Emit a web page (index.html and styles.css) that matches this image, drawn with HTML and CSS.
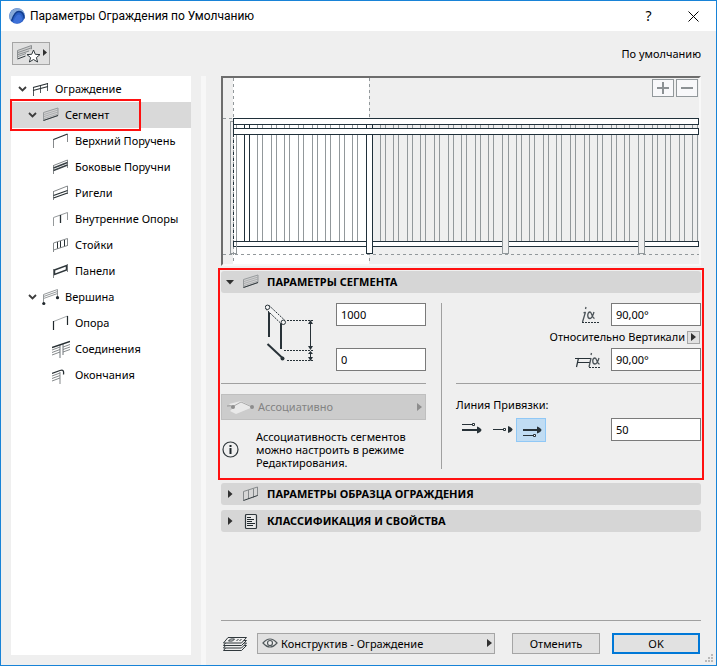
FILE: index.html
```html
<!DOCTYPE html>
<html lang="ru">
<head>
<meta charset="utf-8">
<meta name="viewport" content="width=device-width, initial-scale=1">
<title>Параметры Ограждения по Умолчанию</title>
<link rel="stylesheet" href="styles.css">
</head>
<body>
<svg class="defs" aria-hidden="true">
  <symbol id="chevron" viewBox="0 0 9 8"><path d="M1 2l3.500 3.500L8 2" fill="none" stroke="#3c3c3c" stroke-width="1.800"/></symbol>
  <symbol id="arrow" viewBox="0 0 5 8"><path d="M0 0l5 4-5 4z" fill="currentColor"/></symbol>
  <symbol id="segment" viewBox="0 0 18 18">
    <path d="M1.500 6.500L16 2v7.500L1.500 14.500z" fill="#d2d2d2" stroke="#979b9d"/>
    <path d="M2 8.500l14-4.500M2 10.500L16 6M2 12.500L16 8" stroke="#a2a5a7" stroke-width=".8" fill="none"/>
    <path d="M1.500 14.500L16 9.500" stroke="#30383c" fill="none"/>
  </symbol>
</svg>
<div class="window">
  <header class="titlebar">
    <svg class="logo" viewBox="0 0 16 16" aria-hidden="true">
      <circle cx="8" cy="8" r="7.800" fill="#2a5fc4"/>
      <path d="M.3 9.500C0 4 4 .3 8.500.2c4 0 7 3 7.300 6.800-1.300-2.500-3-3.800-5.300-3.800C6.500 3.200 4 7 2.200 13.200 1 12 .5 11 .3 9.500z" fill="#86a9d8"/>
      <path d="M2.500 13C4.500 7 7 3.400 10 3.500c2.800.1 4.800 2.300 5.300 7" fill="none" stroke="#123c8c" stroke-width="1.300"/>
      <path d="M4 14.300C6 9.500 8 6.300 10 6.500c2 .2 3.200 2.800 3.200 6-2.400 3-6 3.600-9.200 1.800z" fill="#3d70d8"/>
    </svg>
    <h1 class="title">Параметры Ограждения по Умолчанию</h1>
    <button class="title-button" type="button" aria-label="Справка">?</button>
    <button class="title-button" type="button" aria-label="Закрыть">
      <svg width="11" height="11" viewBox="0 0 11 11"><path d="M.5.5l10 10M10.500.5l-10 10" stroke="#000"/></svg>
    </button>
  </header>

  <div class="toolbar">
    <button class="favorites" type="button" aria-label="Избранное">
      <svg width="32" height="19" viewBox="0 0 32 19">
        <path d="M2 6.500l15-5v5L7.500 10 2 12z" fill="#d0d0d0"/>
        <path d="M2.500 14.500v-8l14-5V5M3 8.500l13-4.500M3 10.500L14 7M3 12.500l8-3" fill="none" stroke="#8b8f91"/>
        <path d="M2.500 15l8-3" stroke="#30383c"/>
        <path d="M18.500 6l1.800 4.300 4.700.3-3.600 3 1.200 4.400-4.100-2.500-4.100 2.500 1.200-4.400-3.600-3 4.700-.3z" fill="#fff" stroke="#30383c"/>
        <path d="M28 5l4 3.500-4 3.500z" fill="#303030"/>
      </svg>
    </button>
    <span>По умолчанию</span>
  </div>

  <div class="body">
    <nav class="tree" aria-label="Элементы ограждения">
      <ul>
        <li class="node"><svg class="chev"><use href="#chevron"/></svg>
          <svg class="icon" viewBox="0 0 18 18"><path d="M1.500 7v9M8.500 5v8M15.500 3v8" stroke="#50585b"/><path d="M1 7.500l15-4M1 10.500l15-4" fill="none" stroke="#283034" stroke-width="1.200"/></svg>Ограждение</li>
        <li class="node level-1 selected"><svg class="chev"><use href="#chevron"/></svg><svg class="icon"><use href="#segment"/></svg>Сегмент</li>
        <li class="node level-2"><svg class="icon" viewBox="0 0 18 18"><path d="M1.500 7v9M15.500 2v8" stroke="#85898b"/><path d="M1.500 7.500l14-5.500" stroke="#283034" stroke-width="1.300"/></svg>Верхний Поручень</li>
        <li class="node level-2"><svg class="icon" viewBox="0 0 18 18"><path d="M1.500 7v9M15.500 2v8M1.500 7.500l14-5.500" stroke="#85898b"/><path d="M1.500 10l14-5.500M1.500 12.500l14-5.500" stroke="#384044" stroke-width="1.400"/></svg>Боковые Поручни</li>
        <li class="node level-2"><svg class="icon" viewBox="0 0 18 18"><path d="M1.500 7v9M15.500 2v8M1.500 7.500l14-5.500" stroke="#85898b"/><path d="M1.500 11.500l14-5M1.500 14l14-5" stroke="#283034" stroke-width="1.300"/></svg>Ригели</li>
        <li class="node level-2"><svg class="icon" viewBox="0 0 18 18"><path d="M1.500 16V7.500l14-5V10" fill="none" stroke="#95999b"/><path d="M8.500 5v8" stroke="#283034" stroke-width="1.300"/></svg>Внутренние Опоры</li>
        <li class="node level-2"><svg class="icon" viewBox="0 0 18 18"><path d="M5.500 6v7M8.500 5v7M12.500 4v7" stroke="#283034"/><path d="M1.500 16V7l14-4.500V10M1.500 14l14-4.500" fill="none" stroke="#85898b"/></svg>Стойки</li>
        <li class="node level-2"><svg class="icon" viewBox="0 0 18 18"><path d="M1.500 7v9M15.500 2v8" stroke="#85898b"/><path d="M2.500 8l12-4.500V8l-12 4.500z" fill="none" stroke="#30383c" stroke-width="1.500"/></svg>Панели</li>
        <li class="node level-1"><svg class="chev"><use href="#chevron"/></svg>
          <svg class="icon" viewBox="0 0 18 18"><path d="M1.500 15V6.500l14-5V10M1.500 8.500l14-5M1.500 10.500l14-5" fill="none" stroke="#95999b"/><circle cx="1.800" cy="15.500" r="1.600"/><circle cx="15.500" cy="9.700" r="1.600"/></svg>Вершина</li>
        <li class="node level-2"><svg class="icon" viewBox="0 0 18 18"><path d="M1.500 7.500l14-5.500" stroke="#a5a9ab"/><path d="M1.500 7v9M15.500 2v9" stroke="#20282c" stroke-width="1.200"/></svg>Опора</li>
        <li class="node level-2"><svg class="icon" viewBox="0 0 18 18"><path d="M0 10l8-3M0 12.500l8-3M0 15l8-3M11 7l7-2.500M11 9.500L18 7M11 12l7-2.500" stroke="#85898b"/><path d="M8 5v13M11 4v11" stroke="#70777a"/><path d="M0 7.500l18-6" stroke="#283034" stroke-width="1.400"/></svg>Соединения</li>
        <li class="node level-2"><svg class="icon" viewBox="0 0 18 18"><path d="M0 10l8-3M0 12.500l8-3M0 15l8-3M8 6v12" stroke="#85898b"/><path d="M0 7.500l8-3c3-1 4 0 3.500 4" fill="none" stroke="#283034" stroke-width="1.300"/></svg>Окончания</li>
      </ul>
    </nav>
    <div class="splitter"></div>

    <main class="main">
      <div class="preview">
        <svg class="drawing" viewBox="223 78 476 186" shape-rendering="crispEdges" role="img" aria-label="Вид ограждения">
          <defs>
            <path id="bars" d="M236.500 124v117M257.500 124v117M262.500 124v117M271.500 124v117M276.500 124v117M284.500 124v117M289.500 124v117M298.500 124v117M303.500 124v117M312.500 124v117M317.500 124v117M325.500 124v117M330.500 124v117M339.500 124v117M344.500 124v117M352.500 124v117M357.500 124v117M380.500 124v117M385.500 124v117M393.500 124v117M398.500 124v117M407.500 124v117M412.500 124v117M420.500 124v117M425.500 124v117M434.500 124v117M439.500 124v117M448.500 124v117M453.500 124v117M461.500 124v117M466.500 124v117M475.500 124v117M480.500 124v117M488.500 124v117M493.500 124v117M516.500 124v117M521.500 124v117M529.500 124v117M534.500 124v117M543.500 124v117M548.500 124v117M556.500 124v117M561.500 124v117M570.500 124v117M575.500 124v117M584.500 124v117M589.500 124v117M597.500 124v117M602.500 124v117M611.500 124v117M616.500 124v117M624.500 124v117M629.500 124v117M652.500 124v117M657.500 124v117M665.500 124v117M670.500 124v117M679.500 124v117M684.500 124v117M692.500 124v117M697.500 124v117"/>
          </defs>
          <path d="M233 78h136v186H233z" fill="#fff"/>
          <path d="M230.500 121.500h6v132h-6z" fill="#efefef" stroke="#92989b"/>
          <path d="M234 125h2v128h-2z" fill="#fff"/>
          <path d="M233.500 78v186M369.500 78v40M369.500 258v6M223 118.500h10M223 254.500h476" stroke="#92989b" stroke-dasharray="3 3"/>
          <use href="#bars" stroke="#92989b"/>
          <path d="M244.500 124v117M249.500 124v117M233.500 118v11" stroke="#20303a"/>
          <path d="M233.500 134v113" stroke="#20303a" stroke-dasharray="3 3"/>
          <path d="M233.500 118.500h465v6h-465zM233.500 128.500h465v6h-465zM233.500 241.500h465v5h-465z" fill="#fff" stroke="#20303a"/>
          <path d="M236.500 242v11" stroke="#92989b"/>
          <path d="M366.500 134.500v119h6v-119" fill="#fff" stroke="#20303a"/>
          <path d="M366.500 125v3M372.500 125v3" stroke="#20303a"/>
          <path d="M502.500 134.500v119h6v-119M638.500 134.500v119h6v-119" fill="#efefef" stroke="#92989b"/>
          <path d="M502.500 125v3M508.500 125v3M638.500 125v3M644.500 125v3" stroke="#92989b"/>
        </svg>
        <div class="zoom">
          <button type="button" aria-label="Увеличить"><svg width="12" height="12" viewBox="0 0 12 12"><path d="M6 0v12M0 6h12" stroke="#8c9194" stroke-width="2"/></svg></button>
          <button type="button" aria-label="Уменьшить"><svg width="12" height="12" viewBox="0 0 12 12"><path d="M0 6h12" stroke="#8c9194" stroke-width="2"/></svg></button>
        </div>
      </div>

      <section class="segment-panel">
        <h2 class="section"><button type="button" aria-expanded="true"><svg class="marker" viewBox="0 0 8 8"><path d="M0 2h8L4 6.500z" fill="#303030"/></svg><svg class="icon"><use href="#segment"/></svg>ПАРАМЕТРЫ СЕГМЕНТА</button></h2>
        <div class="columns">
          <div class="left">
            <div class="heights">
              <svg width="50" height="60" viewBox="0 0 50 60" aria-hidden="true">
                <g stroke="#283238" fill="none">
                  <path d="M4 8v26M16 20v26" stroke-width="2"/>
                  <path d="M2.500 41l15 14" stroke-width="2"/>
                  <path d="M4 2.500L20 17.500L16.500 21L.8 6z" fill="#f5f5f5" stroke="none"/>
                  <path d="M4 2.500L20 17.500M.8 6L16.500 21" stroke-dasharray="2 1"/>
                  <circle cx="2.500" cy="4.300" r="2.200" fill="#f5f5f5"/><circle cx="18.300" cy="19.300" r="2.200" fill="#f5f5f5"/>
                  <path d="M22 17.500h26M19 47.500h29M22 57.500h26" stroke-dasharray="2 1"/>
                  <path d="M45.500 19v27M45.500 49v7"/>
                </g>
                <g fill="#283238"><path d="M43 21l2.500-4 2.500 4zM43 43l2.500 4 2.500-4zM43 51l2.500-3 2.500 3zM43 54l2.500 4 2.500-4z"/><circle cx="17.500" cy="55.500" r="2"/></g>
              </svg>
              <div class="fields">
                <input class="field" type="text" value="1000" aria-label="Высота сегмента">
                <input class="field" type="text" value="0" aria-label="Смещение снизу">
              </div>
            </div>
            <hr>
            <button class="associative" type="button" disabled>
              <svg width="30" height="16" viewBox="0 0 30 16"><path d="M3 5l12-3 12 6-17 7-6-3 3-3z" fill="#e9e9e9"/><path d="M7 7.500l8-4.500 11 5" fill="none" stroke="#aaa"/><path d="M1 7q4-1 7 1" stroke="#999" fill="none"/><circle cx="7" cy="8" r="2" fill="#8d8d8d"/><circle cx="26" cy="8" r="2" fill="#8d8d8d"/></svg>
              <span>Ассоциативно</span><svg class="arrow"><use href="#arrow"/></svg>
            </button>
            <div class="note">
              <svg width="17" height="17" viewBox="0 0 17 17" aria-hidden="true"><circle cx="8.500" cy="8.500" r="7.500" fill="none" stroke="#30383c" stroke-width="1.200"/><path d="M8.500 7v6M8.500 4v2" stroke="#20282c" stroke-width="2"/></svg>
              <p>Ассоциативность сегментов можно настроить в режиме Редактирования.</p>
            </div>
          </div>

          <div class="right">
            <div class="angle">
              <svg width="30" height="20" viewBox="0 0 30 20" aria-hidden="true"><path d="M14.500 7L11.500 17M12.500 8l2-1M15 2l-.5 2M23 7c-1.500 5-2.500 6.500-4 6.500-3 0-3-6.500 0-6.500 1.700 0 2.200 6.500 4.500 6.500" fill="none" stroke="#4b5358" stroke-width="1.300"/><path d="M11 17.500h17" stroke="#283238" stroke-dasharray="2 1"/></svg>
              <input class="field" type="text" value="90,00°" aria-label="Угол сегмента">
            </div>
            <div class="relation"><span id="relation">Относительно Вертикали</span><button type="button" aria-labelledby="relation"><svg class="arrow"><use href="#arrow"/></svg></button></div>
            <div class="angle">
              <svg width="30" height="20" viewBox="0 0 30 20" aria-hidden="true"><path d="M4 8.500h16M6 12.500h13M7.500 8L5.500 17" fill="none" stroke="#283238" stroke-width="1.200"/><path d="M20 8l-2 9M20.500 3l-.5 2M28 8c-1.500 5-2.500 6-4 6-3 0-3-6 0-6 1.700 0 2.200 6 4.500 6" fill="none" stroke="#4b5358" stroke-width="1.300"/><path d="M18 17.500h11" stroke="#283238" stroke-dasharray="2 1"/></svg>
              <input class="field" type="text" value="90,00°" aria-label="Угол опоры">
            </div>
            <hr>
            <label class="line-label" for="offset">Линия Привязки:</label>
            <div class="reference">
              <div class="choices" role="radiogroup" aria-label="Линия Привязки">
                <label class="choice"><input type="radio" name="line" aria-label="Слева"><svg viewBox="0 0 20 16"><path d="M1 2.500h11" stroke="#283238"/><path d="M1 8h17" stroke="#283238" stroke-width="2"/><path d="M16 4.500q4 1.500 4.500 3.500-.5 2-4.500 3.500z" fill="#283238"/><path d="M11.500 1.500h2v2h-2z" fill="#fff" stroke="#283238"/></svg></label>
                <label class="choice"><input type="radio" name="line" aria-label="По центру"><svg viewBox="0 0 20 16"><path d="M2 7.500h11" stroke="#283238"/><path d="M17 4q4 1.500 4.500 3.500-.5 2-4.500 3.500z" fill="#283238"/><path d="M12.500 6.500h2v2h-2z" fill="#fff" stroke="#283238"/></svg></label>
                <label class="choice"><input type="radio" name="line" aria-label="Справа" checked><svg viewBox="0 0 20 16"><path d="M2 8h17" stroke="#283238" stroke-width="2"/><path d="M16 4.500q4 1.500 4.500 3.500-.5 2-4.500 3.500z" fill="#283238"/><path d="M2 13.500h11" stroke="#283238"/><path d="M12.500 12.500h2v2h-2z" fill="#fff" stroke="#283238"/></svg></label>
              </div>
              <input class="field" id="offset" type="text" value="50">
            </div>
          </div>
        </div>
      </section>

      <h2 class="section"><button type="button" aria-expanded="false"><svg class="marker" viewBox="0 0 8 8"><path d="M2 0l4.500 4L2 8z" fill="#303030"/></svg><svg class="icon" viewBox="0 0 18 18"><path d="M1.500 6.500v9M6.500 5v9M11.500 3.500v9M15.500 2v9M1.500 6.500l14-4.500" fill="none" stroke="#85898b"/><path d="M1.500 15.500l14-5" stroke="#30383c"/></svg>ПАРАМЕТРЫ ОБРАЗЦА ОГРАЖДЕНИЯ</button></h2>
      <h2 class="section"><button type="button" aria-expanded="false"><svg class="marker" viewBox="0 0 8 8"><path d="M2 0l4.500 4L2 8z" fill="#303030"/></svg><svg class="icon" viewBox="0 0 18 18"><rect x="3.500" y="2.500" width="11" height="14" rx="1" fill="#e8e8e8" stroke="#30383c" stroke-width="1.200"/><path d="M5 5.500h4M5 7.500h7M5 9.500h5M5 11.500h8M5 13.500h6" stroke="#20282c"/></svg>КЛАССИФИКАЦИЯ И СВОЙСТВА</button></h2>

      <footer class="footer">
        <svg width="26" height="16" viewBox="0 0 26 16" aria-hidden="true"><g fill="#efefef" stroke="#30383c"><path d="M2.500 14.500l4-5h19l-5 5z"/><path d="M2.500 12l4-5h19l-5 5z"/><path d="M2.500 9.500l4-5h19l-5 5z"/><path d="M2.500 7l4.500-5.500h18.500l-5 5.500z"/><path d="M7.500 5l2-2h4l-2 2zM15.500 5l2-2M18.500 5l2-2" fill="none"/></g></svg>
        <div class="layer">
          <svg class="eye" viewBox="0 0 16 10" aria-hidden="true"><path d="M1 5q7-8 14 0-7 8-14 0z" fill="#e8e8e8" stroke="#50585b" stroke-width="1.200"/><circle cx="8" cy="5" r="2.500" fill="#eee" stroke="#50585b" stroke-width="1.200"/></svg>
          <select aria-label="Слой"><option>Конструктив - Ограждение</option></select>
          <svg class="arrow"><use href="#arrow"/></svg>
        </div>
        <button class="action" type="button">Отменить</button>
        <button class="action primary" type="submit">OK</button>
      </footer>
    </main>
  </div>
  <svg class="grip" viewBox="0 0 8 8" aria-hidden="true"><path d="M6 0h2v2H6zM3 3h2v2H3zM6 3h2v2H6zM0 6h2v2H0zM3 6h2v2H3zM6 6h2v2H6z" fill="#b9b9b9"/></svg>
</div>
</body>
</html>
```
FILE: styles.css
```css
* { box-sizing: border-box; }

body {
  margin: 0;
  font: 11px/14px "Noto Sans", "Open Sans", sans-serif;
  color: #000;
}

button, input, select { font: inherit; color: inherit; margin: 0; }
button { padding: 0; cursor: default; }
h1, h2, p, ul { margin: 0; padding: 0; }
svg { display: block; flex: none; }
.defs { position: absolute; width: 0; height: 0; }

.window {
  position: relative;
  display: flex;
  flex-direction: column;
  min-height: 100vh;
  border: 1px solid #1883d7;
  background: #efefef;
}

.titlebar {
  display: flex;
  align-items: center;
  height: 30px;
  padding-left: 8px;
  background: #fff;
}
.logo { width: 16px; height: 16px; margin-right: 5px; }
.title { flex: 1; font-family: Roboto, "Noto Sans", sans-serif; font-size: 12px; font-weight: 400; }
.title-button {
  display: grid;
  place-items: center;
  width: 45px;
  height: 30px;
  border: 0;
  background: none;
  font-size: 14px;
}

.toolbar {
  display: flex;
  align-items: center;
  justify-content: space-between;
  height: 45px;
  padding: 0 15px 0 11px;
}
.favorites {
  display: grid;
  place-items: center;
  width: 38px;
  height: 23px;
  border: 1px solid #a5a5a5;
  background: #e1e1e1;
}

.body {
  flex: 1;
  display: grid;
  grid-template-columns: 180px 5px minmax(0, 1fr);
  padding: 0 15px 0 10px;
}

.tree { margin-bottom: 10px; background: #fff; }
.tree ul { list-style: none; }
.node {
  position: relative;
  display: flex;
  align-items: center;
  gap: 5px;
  height: 26px;
  padding-left: 7px;
  white-space: nowrap;
}
.level-1 { padding-left: 17px; }
.level-2 { padding-left: 41px; }
.selected { background: #d9d9d9; }
.selected::after {
  content: "";
  position: absolute;
  inset: -3px 50px -3px -1px;
  border: 2px solid #ff1010;
}
.chev { width: 9px; height: 8px; }
.icon { width: 18px; height: 18px; fill: #20282c; }
.arrow { width: 5px; height: 8px; color: #303030; }

.splitter { margin-left: 10px; width: 5px; background: #f7f7f7; }

.main {
  display: flex;
  flex-direction: column;
  margin-left: 25px;
  padding-bottom: 11px;
}

.preview {
  position: relative;
  border: 2px solid;
  border-color: #6d6d6d #f8f8f8 #f8f8f8 #6d6d6d;
}
.drawing { width: 100%; height: auto; }
.zoom {
  position: absolute;
  top: 1px;
  right: 1px;
  display: flex;
  gap: 2px;
}
.zoom button {
  display: grid;
  place-items: center;
  width: 22px;
  height: 18px;
  border: 1px solid #92989b;
  background: #f8f8fa;
}

.segment-panel {
  margin: 2px -3px 3px;
  padding: 1px 1px 9px;
  border: 2px solid #ff1010;
}

.section { font-size: 11px; font-weight: 700; }
.section + .section { margin-top: 5px; }
.section button {
  display: flex;
  align-items: center;
  width: 100%;
  height: 22px;
  padding-left: 5px;
  border: 0;
  border-radius: 3px;
  background: #d6d6d6;
  text-align: left;
}
.marker { width: 8px; height: 8px; }
.section .icon { margin: 0 7px 0 8px; }

.columns {
  display: grid;
  grid-template-columns: 221fr 259fr;
  padding-top: 10px;
}
.left { padding-right: 15px; border-right: 1px solid #a0a0a0; }
.right { padding-left: 14px; }
hr { height: 1px; margin: 12px 0 0; border: 0; background: #a0a0a0; }

.field {
  width: 90px;
  height: 23px;
  padding: 0 4px;
  border: 1px solid #7a7a7a;
  border-radius: 0;
  background: #fff;
}
.heights { display: flex; justify-content: flex-end; gap: 21px; }
.fields { display: grid; gap: 22px; }

.associative {
  display: flex;
  align-items: center;
  gap: 2px;
  width: 100%;
  height: 26px;
  margin-top: 10px;
  padding: 0 3px 0 4px;
  border: 1px solid #bfbfbf;
  background: #ccc;
  color: #838383;
}
.associative span { flex: 1; text-align: left; }
.associative .arrow { color: #8d8d8d; }

.note {
  display: flex;
  align-items: center;
  gap: 17px;
  margin-top: 10px;
  padding-left: 1px;
  line-height: 13px;
}

.angle, .relation { display: flex; align-items: center; justify-content: flex-end; }
.angle { gap: 10px; }
.relation { gap: 2px; height: 22px; padding-right: 1px; }
.relation button {
  display: grid;
  place-items: center;
  width: 13px;
  height: 13px;
  border: 1px solid #a5a5a5;
  background: #e1e1e1;
}
.line-label { display: block; margin: 14px 0 6px; }
.reference { display: flex; justify-content: space-between; align-items: flex-start; }
.choices { display: flex; }
.choice {
  position: relative;
  display: grid;
  place-items: center;
  width: 30px;
  height: 24px;
  border: 1px solid transparent;
}
.choice:has(:checked) { border-color: #90c8f6; background: #c0dcf3; }
.choice input { position: absolute; inset: 0; width: 100%; height: 100%; margin: 0; opacity: 0; }
.choice svg { width: 20px; height: 16px; overflow: visible; }

.footer {
  display: flex;
  align-items: center;
  margin-top: auto;
  padding-top: 12px;
  padding-right: 1px;
  border-top: 1px solid #a0a0a0;
}
.layer { position: relative; flex: 1; margin: 0 17px 0 10px; }
.layer select {
  display: block;
  width: 100%;
  height: 21px;
  padding: 0 16px 0 23px;
  border: 1px solid #a5a5a5;
  border-radius: 0;
  background: #e1e1e1;
  appearance: none;
}
.eye { position: absolute; left: 5px; top: 5px; width: 16px; height: 10px; }
.layer .arrow { position: absolute; right: 3px; top: 6px; pointer-events: none; }
.action {
  width: 88px;
  height: 21px;
  border: 1px solid #a5a5a5;
  background: #e1e1e1;
}
.primary { margin-left: 12px; border: 2px solid #0078d7; }

.grip { position: absolute; right: 3px; bottom: 3px; width: 8px; height: 8px; }
```
